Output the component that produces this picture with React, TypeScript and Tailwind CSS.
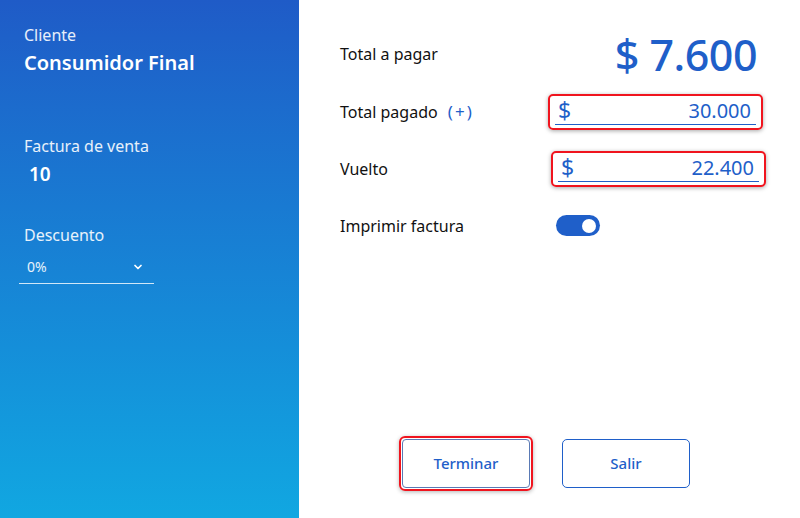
import { ChevronDown } from "lucide-react";

const font = { fontFamily: '"Segoe UI", "Noto Sans", sans-serif' };

function MoneyField({ value }: { value: string }) {
  return (
    <div className="w-[215px] h-[36px] rounded-[5px] border-2 border-[#f0141e] shadow-[0_1px_4px_rgba(0,0,0,0.35)] px-[5px] pt-[2px]">
      <div className="flex items-center justify-between h-[27px] border-b-[1.5px] border-[#1f5fc9] text-[#1f5fc9] text-[20px] leading-none pl-[3px] pr-[5px]">
        <span className="text-[23px]">$</span>
        <span>{value}</span>
      </div>
    </div>
  );
}

export default function App() {
  return (
    <div className="flex w-[800px] h-[518px] bg-white" style={font}>
      <aside className="w-[299px] shrink-0 bg-gradient-to-b from-[#1f5bc7] to-[#11a7e1] text-white px-[24px] pt-[25px]">
        <div className="text-[16px] leading-[20px] text-white/90">Cliente</div>
        <div className="text-[20px] leading-[26px] font-semibold mt-[5px]">Consumidor Final</div>

        <div className="text-[16px] leading-[20px] text-white/90 mt-[60px]">Factura de venta</div>
        <div className="text-[19px] leading-[26px] font-semibold mt-[5px] pl-[5px]">10</div>

        <div className="text-[16px] leading-[20px] text-white/90 mt-[38px]">Descuento</div>
        <div className="-ml-[5px] mt-[14px] w-[135px] flex items-center justify-between border-b border-white/80 pl-[8px] pr-[10px] pb-[8px]">
          <span className="text-[14px] leading-[16px] text-white/90">0%</span>
          <ChevronDown size={12} strokeWidth={3.5} />
        </div>
      </aside>

      <main className="flex-1 flex flex-col pl-[41px] pr-[43px] pt-[31px] pb-[27px] text-[#111]">
        <div className="flex items-center justify-between h-[46px]">
          <span className="text-[16px]">Total a pagar</span>
          <span className="text-[43px] font-medium tracking-[-0.5px] leading-none text-[#1f5fc9]">$ 7.600</span>
        </div>

        <div className="flex items-center justify-between mt-[17px] h-[35px]">
          <span className="text-[16px]">
            Total pagado <span className="ml-[6px] text-[17px] tracking-[2px] text-[#1f5fc9]">(+)</span>
          </span>
          <div className="-mr-[6px]"><MoneyField value="30.000" /></div>
        </div>

        <div className="flex items-center justify-between mt-[22px] h-[35px]">
          <span className="text-[16px]">Vuelto</span>
          <div className="-mr-[9px]"><MoneyField value="22.400" /></div>
        </div>

        <div className="flex items-center mt-[27px] h-[25px]">
          <span className="text-[16px] w-[216px]">Imprimir factura</span>
          <div className="w-[44px] h-[21px] rounded-full bg-[#1f5fc9] flex items-center justify-end pr-[4px]">
            <div className="w-[14px] h-[14px] rounded-full bg-white" />
          </div>
        </div>

        <div className="flex-1" />

        <div className="flex justify-center gap-[29px] pr-[8px]">
          <div className="rounded-[6px] border-2 border-[#f0141e] p-[1px] shadow-[0_1px_4px_rgba(0,0,0,0.3)]">
            <button className="w-[128px] h-[49px] rounded-[4px] border border-[#5a7ab5] bg-white text-[#1f5fc9] text-[15px] font-medium">
              Terminar
            </button>
          </div>
          <div className="pt-[3px]">
            <button className="w-[128px] h-[49px] rounded-[5px] border border-[#1f5fc9] bg-white text-[#1f5fc9] text-[15px] font-medium">
              Salir
            </button>
          </div>
        </div>
      </main>
    </div>
  );
}
